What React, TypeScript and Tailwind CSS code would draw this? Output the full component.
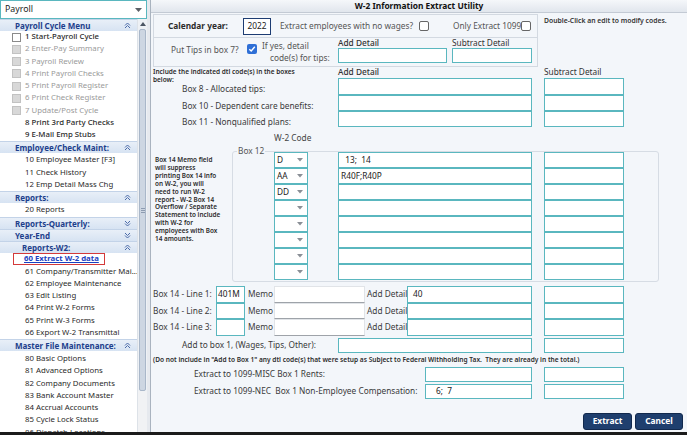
import React from 'react';

function Chev({ up }: { up: boolean }) {
  return (
    <svg width="7" height="7" viewBox="0 0 7 7" fill="none" stroke="#4a6aa8" strokeWidth="1">
      {up ? (
        <>
          <path d="M1 3.5 L3.5 1 L6 3.5" />
          <path d="M1 6 L3.5 3.5 L6 6" />
        </>
      ) : (
        <>
          <path d="M1 1 L3.5 3.5 L6 1" />
          <path d="M1 3.5 L3.5 6 L6 3.5" />
        </>
      )}
    </svg>
  );
}

function Header({ label, open = true, indent = false }: { label: string; open?: boolean; indent?: boolean }) {
  return (
    <div className="h-[12px] shrink-0 flex items-center justify-between bg-linear-to-b from-[#e8eff8] to-[#d7e3f2] border-t border-[#c3d3e8] pr-[6px]">
      <span className={`${indent ? 'pl-[22px]' : 'pl-[15px]'} text-[8px] font-bold text-[#1d3f8c] leading-none whitespace-nowrap`}>
        {label}
      </span>
      <Chev up={open} />
    </div>
  );
}

type ItemKind = 'check' | 'disabled' | 'plain' | 'strong';

function Item({ label, kind = 'plain' }: { label: string; kind?: ItemKind }) {
  return (
    <div className="h-[12.25px] shrink-0 flex items-center whitespace-nowrap overflow-hidden">
      {kind === 'check' && <span className="ml-[12px] mr-[4px] w-[9px] h-[9px] border border-[#8a8a8a] bg-white shrink-0" />}
      {kind === 'disabled' && <span className="ml-[12px] mr-[4px] w-[9px] h-[9px] border border-[#c2c2c2] bg-[#d8d8d8] shrink-0" />}
      <span
        className={`${kind === 'check' || kind === 'disabled' ? '' : 'pl-[25px]'} text-[7.8px] leading-none ${
          kind === 'disabled' ? 'text-[#9a9a9a]' : 'text-[#2a2a2a]'
        } ${kind === 'check' || kind === 'strong' ? 'font-medium' : ''}`}
      >
        {label}
      </span>
    </div>
  );
}

function Field({ w, value = '', pad = 'pl-[2px]' }: { w: string; value?: string; pad?: string }) {
  return (
    <div className={`${w} h-full shrink-0 bg-white border-[1.5px] border-[#5ab7bf] flex items-center ${pad} text-[8.3px] text-[#222] leading-none whitespace-pre overflow-hidden`}>
      {value}
    </div>
  );
}

function CodeSelect({ value }: { value: string }) {
  return (
    <div className="w-[34px] h-full shrink-0 bg-white border-[1.5px] border-[#5ab7bf] flex items-center justify-between pl-[2px] pr-[4px] text-[8.3px] text-[#222] leading-none">
      <span>{value}</span>
      <svg width="6" height="4" viewBox="0 0 6 4">
        <path d="M0 0 L6 0 L3 3.5 Z" fill="#8a8f96" />
      </svg>
    </div>
  );
}

function Check({ checked = false }: { checked?: boolean }) {
  if (checked) {
    return (
      <span className="w-[10px] h-[10px] shrink-0 rounded-[2px] bg-[#2f6fd6] flex items-center justify-center">
        <svg width="8" height="8" viewBox="0 0 8 8" fill="none" stroke="white" strokeWidth="1.4">
          <path d="M1.3 4.2 L3.2 6 L6.8 1.8" />
        </svg>
      </span>
    );
  }
  return <span className="w-[10px] h-[10px] shrink-0 rounded-[2px] border border-[#666] bg-white" />;
}

function DetailRow({ label, h }: { label: string; h: string }) {
  return (
    <div className={`flex ${h}`}>
      <div className="w-[187px] shrink-0 pl-[31px] pt-[6px] leading-[10px] whitespace-nowrap">{label}</div>
      <Field w="w-[194px]" />
      <div className="w-[12px] shrink-0" />
      <Field w="w-[80px]" />
    </div>
  );
}

const memoLines = [
  'Box 14 Memo field',
  'will suppress',
  'printing Box 14 info',
  'on W-2, you will',
  'need to run W-2',
  'report - W-2 Box 14',
  'Overflow / Separate',
  'Statement to include',
  'with W-2 for',
  'employees with Box',
  '14 amounts.',
];

const box12 = [
  { code: 'D', add: '  13;  14' },
  { code: 'AA', add: 'R40F;R40P' },
  { code: 'DD', add: '' },
  { code: '', add: '' },
  { code: '', add: '' },
  { code: '', add: '' },
  { code: '', add: '' },
  { code: '', add: '' },
];

export default function App() {
  return (
    <div className="w-[687px] h-[435px] flex overflow-hidden bg-white border-b-[3px] border-[#1b1b1b] font-['Noto_Sans',sans-serif]">
      {/* sidebar */}
      <div className="w-[147px] shrink-0 flex flex-col bg-white">
        <div className="h-[19px] shrink-0 border border-[#5ab7bf] flex items-center justify-between pl-[4px] pr-[4px]">
          <span className="text-[8.8px] text-[#222] leading-none">Payroll</span>
          <svg width="7" height="4" viewBox="0 0 7 4">
            <path d="M0 0 L7 0 L3.5 4 Z" fill="#5b5f66" />
          </svg>
        </div>
        <div className="flex flex-1 min-h-0">
          <div className="w-[137px] shrink-0 flex flex-col">
            <Header label="Payroll Cycle Menu" />
            <Item label="1 Start-Payroll Cycle" kind="check" />
            <Item label="2 Enter-Pay Summary" kind="disabled" />
            <Item label="3 Payroll Review" kind="disabled" />
            <Item label="4 Print Payroll Checks" kind="disabled" />
            <Item label="5 Print Payroll Register" kind="disabled" />
            <Item label="6 Print Check Register" kind="disabled" />
            <Item label="7 Update/Post Cycle" kind="disabled" />
            <Item label="8 Print 3rd Party Checks" kind="strong" />
            <Item label="9 E-Mail Emp Stubs" kind="strong" />
            <Header label="Employee/Check Maint:" />
            <div className="pt-[1px]">
              <Item label="10 Employee Master   [F3]" />
              <Item label="11 Check History" />
              <Item label="12 Emp Detail Mass Chg" />
            </div>
            <Header label="Reports:" />
            <div className="pt-[1px] pb-[1px]">
              <Item label="20 Reports" />
            </div>
            <Header label="Reports-Quarterly:" open={false} />
            <Header label="Year-End" open={false} />
            <Header label="Reports-W2:" indent />
            <div className="h-[12.25px] shrink-0 flex items-center">
              <span className="ml-[13px] h-[12px] w-[92px] border-[1.5px] border-[#d43a3a] flex items-center pl-[10px] text-[7.8px] font-bold text-[#1a3fc0] underline leading-none whitespace-nowrap">
                60 Extract W-2 data
              </span>
            </div>
            <Item label="61 Company/Transmitter Mai..." />
            <Item label="62 Employee Maintenance" />
            <Item label="63 Edit Listing" />
            <Item label="64 Print W-2 Forms" />
            <Item label="65 Print W-3 Forms" />
            <Item label="66 Export W-2 Transmittal" />
            <Header label="Master File Maintenance:" />
            <div className="pt-[2px]">
              <Item label="80 Basic Options" />
              <Item label="81 Advanced Options" />
              <Item label="82 Company Documents" />
              <Item label="83 Bank Account Master" />
              <Item label="84 Accrual Accounts" />
              <Item label="85 Cycle Lock Status" />
              <Item label="86 Dispatch Locations" />
            </div>
          </div>
          {/* scrollbar */}
          <div className="w-[10px] shrink-0 flex flex-col bg-[#eef1f5] border-l border-[#dde2e8]">
            <div className="h-[10px] shrink-0 flex items-center justify-center">
              <svg width="6" height="4" viewBox="0 0 6 4">
                <path d="M0 4 L6 4 L3 0 Z" fill="#4b5563" />
              </svg>
            </div>
            <div className="h-[362px] shrink-0 mx-[1px] rounded-[2px] bg-[#cdd6e2] border border-[#a9b7c9] flex flex-col items-center justify-center gap-[1px]">
              <span className="w-[4px] h-px bg-[#8d9bb0]" />
              <span className="w-[4px] h-px bg-[#8d9bb0]" />
              <span className="w-[4px] h-px bg-[#8d9bb0]" />
            </div>
            <div className="flex-1 bg-[#f1f2f4]" />
          </div>
        </div>
      </div>
      <div className="w-[3px] shrink-0 bg-[#e6e9ee]" />

      {/* main */}
      <div className="flex-1 flex flex-col bg-[#f3f6fa] border-l border-[#a9b3bf] text-[8.3px] text-[#3a3a3a]">
        <div className="h-[13px] shrink-0 flex items-center justify-center bg-linear-to-b from-[#f5f7fa] to-[#e1e6ed] border-b border-[#c3cad4] font-bold text-[8.4px] text-[#111] leading-none">
          W-2 Information Extract Utility
        </div>

        {/* top options */}
        <div className="flex pt-[1px]">
          <div className="ml-[2px] w-[385px] shrink-0 border border-[#d3d9e1] flex flex-col">
            <div className="h-[23px] flex items-center border-b border-[#d3d9e1] pl-[14px] whitespace-nowrap">
              <span className="w-[75px] shrink-0 font-bold text-[#2b2b2b]">Calendar year:</span>
              <span className="w-[28px] h-[17px] shrink-0 bg-white border-[1.5px] border-[#1d3c72] flex items-center justify-center text-[#222]">
                2022
              </span>
              <span className="ml-[9px] w-[139px] shrink-0 text-[#555]">Extract employees with no wages?</span>
              <Check />
              <span className="ml-[24px] w-[68px] shrink-0 text-[#555]">Only Extract 1099</span>
              <Check />
            </div>
            <div className="h-[28px] flex items-start whitespace-nowrap">
              <span className="ml-[17px] w-[76px] shrink-0 mt-[6px] leading-[11px] text-[#555]">Put Tips in box 7?</span>
              <span className="mt-[6px]">
                <Check checked />
              </span>
              <div className="ml-[5px] w-[76px] shrink-0 mt-[2px] leading-[12px] text-[#555]">
                <div>If yes, detail</div>
                <div className="pl-[8px]">code(s) for tips:</div>
              </div>
              <div className="w-[109px] shrink-0 flex flex-col">
                <span className="h-[10px] leading-[10px] font-medium text-[#333]">Add Detail</span>
                <div className="h-[15px]">
                  <Field w="w-[109px]" />
                </div>
              </div>
              <div className="ml-[5px] w-[80px] shrink-0 flex flex-col">
                <span className="h-[10px] leading-[10px] text-[#333]">Subtract Detail</span>
                <div className="h-[15px]">
                  <Field w="w-[80px]" />
                </div>
              </div>
            </div>
          </div>
          <div className="ml-[6px] mt-[2px] text-[6.8px] font-semibold text-[#333] leading-[10px] whitespace-nowrap">
            Double-Click an edit to modify codes.
          </div>
        </div>

        {/* include header */}
        <div className="flex h-[11px] shrink-0">
          <div className="w-[187px] shrink-0 pl-[2px] pt-[1px] text-[6.5px] font-semibold leading-[8px] text-[#2b2b2b] whitespace-nowrap">
            <div>Include the indicated dtl code(s) in the boxes</div>
            <div>below:</div>
          </div>
          <div className="w-[206px] shrink-0 leading-[10px] font-medium text-[#333]">Add Detail</div>
          <div className="leading-[10px] text-[#333]">Subtract Detail</div>
        </div>
        <DetailRow label="Box 8 - Allocated tips:" h="h-[17px]" />
        <DetailRow label="Box 10 - Dependent care benefits:" h="h-[16px]" />
        <DetailRow label="Box 11 - Nonqualified plans:" h="h-[16px]" />

        <div className="h-[24px] shrink-0 pl-[123px] pt-[6px] leading-[10px] text-[#444]">W-2 Code</div>

        {/* box 12 */}
        <div className="flex h-[131px] shrink-0">
          <div className="w-[81px] shrink-0 pl-[4px] pt-[5px] text-[6.4px] font-semibold leading-[7.9px] text-[#2b2b2b] whitespace-nowrap">
            {memoLines.map((l) => (
              <div key={l}>{l}</div>
            ))}
          </div>
          <div className="relative w-[427px] shrink-0 border border-[#d6dce4] rounded-[3px] pb-[1px]">
            <span className="absolute -top-[6px] left-[4px] px-[1px] bg-[#f3f6fa] leading-[10px] text-[#555]">Box 12</span>
            {box12.map((r, i) => (
              <div key={i} className="flex h-[16px]">
                <div className="ml-[41px] h-full">
                  <CodeSelect value={r.code} />
                </div>
                <div className="w-[30px] shrink-0" />
                <Field w="w-[194px]" value={r.add} />
                <div className="w-[12px] shrink-0" />
                <Field w="w-[80px]" />
              </div>
            ))}
          </div>
        </div>

        {/* box 14 */}
        <div className="mt-[4px] flex flex-col">
          {[1, 2, 3].map((n) => (
            <div key={n} className="flex h-[16.5px] items-stretch">
              <div className="w-[65px] shrink-0 pl-[2px] flex items-center whitespace-nowrap">Box 14 - Line {n}:</div>
              <Field w="w-[29px]" value={n === 1 ? '401M' : ''} pad="pl-[1px]" />
              <div className="w-[29px] shrink-0 pl-[3px] flex items-center">Memo</div>
              <div className="w-[91px] shrink-0 bg-white border border-[#e1e4e8] border-b-[#9ea3a9]" />
              <div className="w-[42px] shrink-0 pl-[2px] flex items-center whitespace-nowrap">Add Detail</div>
              <Field w="w-[125px]" value={n === 1 ? '40' : ''} pad="pl-[5px]" />
              <div className="w-[12px] shrink-0" />
              <Field w="w-[80px]" />
            </div>
          ))}
        </div>

        <div className="mt-[2.5px] flex h-[15px] shrink-0">
          <div className="w-[187px] shrink-0 pl-[31px] flex items-center whitespace-nowrap">Add to box 1, (Wages, Tips, Other):</div>
          <Field w="w-[194px]" />
          <div className="w-[12px] shrink-0" />
          <Field w="w-[80px]" />
        </div>

        <div className="mt-[2px] h-[10px] shrink-0 pl-[2px] text-[6.6px] font-semibold leading-[10px] text-[#2b2b2b] whitespace-pre">
          {'(Do not include in "Add to Box 1" any dtl code(s) that were setup as Subject to Federal Withholding Tax.  They are already in the total.)'}
        </div>

        <div className="mt-[2px] flex h-[15px] shrink-0">
          <div className="w-[274px] shrink-0 pl-[43px] flex items-center whitespace-nowrap">Extract to 1099-MISC Box 1 Rents:</div>
          <Field w="w-[107px]" />
          <div className="w-[12px] shrink-0" />
          <Field w="w-[80px]" />
        </div>
        <div className="mt-[2px] flex h-[15px] shrink-0">
          <div className="w-[274px] shrink-0 pl-[43px] flex items-center whitespace-pre">Extract to 1099-NEC  Box 1 Non-Employee Compensation:</div>
          <Field w="w-[107px]" value="6;  7" pad="pl-[10px]" />
          <div className="w-[12px] shrink-0" />
          <Field w="w-[80px]" />
        </div>

        <div className="mt-[14px] flex justify-end gap-[3px] pr-[4px]">
          <button className="w-[49px] h-[17px] rounded-[3px] bg-[#1f3f6e] border border-[#12294d] text-white font-bold text-[8.4px] leading-none">
            Extract
          </button>
          <button className="w-[48px] h-[17px] rounded-[3px] bg-[#1f3f6e] border border-[#12294d] text-white font-bold text-[8.4px] leading-none">
            Cancel
          </button>
        </div>
      </div>
    </div>
  );
}
